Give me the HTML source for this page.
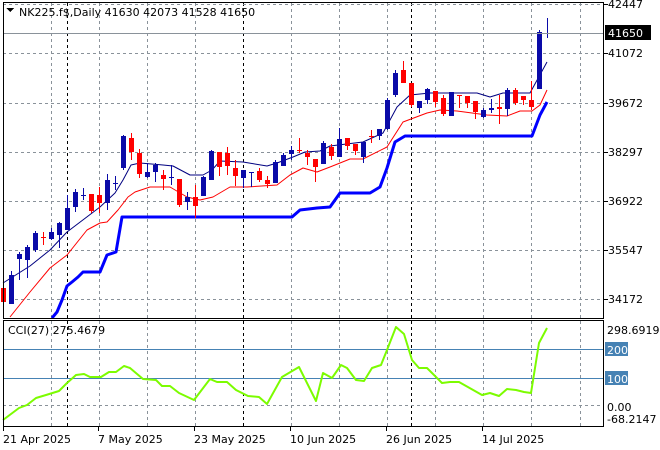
<!DOCTYPE html>
<html><head><meta charset="utf-8"><style>
html,body{margin:0;padding:0;background:#fff;width:660px;height:450px;overflow:hidden}
svg{display:block}
text{font-family:"DejaVu Sans","Liberation Sans",sans-serif;font-size:11px;fill:#000}
</style></head><body>
<svg id="s" width="660" height="450" xmlns="http://www.w3.org/2000/svg" shape-rendering="crispEdges">
<g id="grid" stroke="#8a929a" stroke-dasharray="3,3" stroke-width="1"></g>
<g id="lines" fill="none" shape-rendering="auto"></g>
<g id="candles"></g>
<line x1="3" y1="33.5" x2="604" y2="33.5" stroke="#8a929a"/>
<rect x="3.5" y="2.5" width="600" height="316" fill="none" stroke="#000"/>
<rect x="3.5" y="320.5" width="600" height="106" fill="none" stroke="#000"/>
<path d="M6 8 L14 8 L10 12 Z" fill="#000"/>
<text x="19" y="16">NK225.f$,Daily  41630 42073 41528 41650</text>
<text x="8" y="334">CCI(27) 275.4679</text>
<g id="ylab"></g>
<rect x="605" y="25" width="46" height="15" fill="#000"/>
<text x="608" y="37" style="fill:#fff">41650</text>
<text x="607" y="334">298.6919</text>
<rect x="605" y="342" width="23" height="14" fill="#4682b4"/>
<text x="607" y="354" style="fill:#fff">200</text>
<rect x="605" y="371" width="23" height="14" fill="#4682b4"/>
<text x="607" y="383" style="fill:#fff">100</text>
<text x="607" y="411">0.00</text>
<text x="607" y="423">-68.2147</text>
<g id="dates"></g>
</svg>
<script>
var NS="http://www.w3.org/2000/svg";
function el(p,t,a,txt){var e=document.createElementNS(NS,t);for(var k in a)e.setAttribute(k,a[k]);if(txt)e.textContent=txt;document.getElementById(p).appendChild(e);return e;}
[51,99,147,195,291,339,387,435,483,531,580].forEach(function(x){el('grid','line',{x1:x+.5,y1:3,x2:x+.5,y2:318});el('grid','line',{x1:x+.5,y1:321,x2:x+.5,y2:426});});
[67,243,411].forEach(function(x){el('grid','line',{x1:x+.5,y1:3,x2:x+.5,y2:318,stroke:'#000'});el('grid','line',{x1:x+.5,y1:321,x2:x+.5,y2:426,stroke:'#000'});});
var ys=[4,53,103,152,201,250,299],lb=['42447','41072','39672','38297','36922','35547','34172'];
ys.forEach(function(y,i){el('grid','line',{x1:3,y1:y+.5,x2:604,y2:y+.5});el('grid','line',{x1:604,y1:y+.5,x2:608,y2:y+.5,stroke:'#000','stroke-dasharray':'none'});el('ylab','text',{x:608,y:y+4},lb[i]);});
el('grid','line',{x1:3,y1:405.5,x2:604,y2:405.5});
el('grid','line',{x1:3,y1:349.5,x2:604,y2:349.5,stroke:'#4682b4','stroke-dasharray':'none'});
el('grid','line',{x1:3,y1:378.5,x2:604,y2:378.5,stroke:'#4682b4','stroke-dasharray':'none'});
[[3,'21 Apr 2025'],[98,'7 May 2025'],[194,'23 May 2025'],[290,'10 Jun 2025'],[386,'26 Jun 2025'],[482,'14 Jul 2025']].forEach(function(d){el('dates','text',{x:d[0],y:443},d[1]);el('dates','line',{x1:d[0]+.5,y1:426,x2:d[0]+.5,y2:431,stroke:'#000'});});
function pl(pts,c,w){el('lines','polyline',{points:pts,stroke:c,'stroke-width':w,'stroke-linejoin':'round'});}
pl("3,283 30,266 50,250 67,232 100,207 115,193 123,180 131,165 140,163 163,165 173,166 190,175 203,175 212,170 220,161 243,162 267,166 277,163 293,157 305,152 320,151 330,146 363,142 383,133 397,107 410,95 430,93 477,93 490,97 503,93 530,93 547,62","#000080",1);
pl("10,317 30,292 50,268 67,255 87,230 100,223 107,222 118,210 128,197 135,192 150,187 170,187 187,197 200,200 213,197 230,187 247,187 277,185 290,175 303,168 317,172 330,167 350,159 363,159 387,147 403,122 427,113 440,110 457,111 487,115 507,116 520,111 532,111 540,105 547,90","#ff0000",1);
pl("52,318 57,312 62,300 67,286 72,282 78,277 83,272 100,272 107,255 116,252 122,217 292,217 300,210 317,208 330,207 340,193 370,193 380,187 387,168 395,142 405,136 532,136 540,115 547,102","#0000ff",3);
pl("3,420 19,408 27,405 36,398 46,395 59,391 67,383 76,375 84,374 90,377 101,377 109,372 116,372 124,366 130,368 143,379 156,380 162,386 170,386 179,393 194,400 210,379 217,382 227,382 236,390 248,396 259,397 267,404 282,377 299,367 316,401 323,373 332,378 341,365 347,368 356,380 364,381 372,368 381,365 387,350 396,327 404,334 412,360 419,368 427,368 442,383 450,382 459,382 482,395 490,393 499,396 507,389 516,390 524,392 531,393 539,343 547,328","#7cfc00",2);
var C=[[288,302,285,312,'r'],[275,304,271,304,'b'],[254,259,252,280,'b'],[247,260,245,278,'b'],[233,250,231,252,'b'],[237,238,232,245,'r'],[232,239,228,240,'b'],[223,235,222,248,'b'],
[208,230,195,230,'b'],[192,207,189,212,'b'],[195,196,188,200,'b'],[194,211,194,213,'r'],[195,203,187,213,'r'],[180,203,174,210,'b'],[183,184,176,190,'b'],[136,168,135,170,'b'],[138,152,133,160,'r'],[153,174,149,178,'r'],[172,177,163,178,'b'],[165,172,163,182,'b'],[175,179,170,190,'r'],[177,178,165,185,'b'],[179,205,179,207,'r'],[197,202,192,210,'b'],[197,206,185,218,'r'],[177,196,176,196,'b'],[151,180,150,180,'b'],[152,167,152,176,'r'],[153,166,147,175,'r'],[168,176,160,186,'r'],[170,178,170,188,'b'],[172,173,172,187,'b'],[171,180,168,182,'r'],[180,184,176,188,'r'],[162,183,160,183,'b'],[155,166,153,166,'b'],[150,154,146,160,'b'],[150,151,138,153,'r'],[153,157,150,165,'r'],[159,167,159,182,'r'],[143,164,141,164,'b'],[147,156,144,160,'r'],
[139,157,128,157,'b'],[138,146,138,150,'r'],[144,151,144,155,'r'],[142,157,142,163,'b'],[136,137,130,143,'r'],[129,136,129,140,'b'],[100,129,98,130,'b'],[73,95,70,97,'b'],[70,83,61,83,'r'],[83,105,83,107,'r'],[101,108,101,113,'b'],[89,100,88,104,'b'],[91,102,91,107,'r'],[98,114,95,116,'r'],[92,116,92,116,'b'],[95,96,95,108,'r'],[96,103,96,108,'r'],[101,112,101,119,'r'],[110,117,108,118,'b'],[108,110,99,113,'b'],[107,109,95,124,'r'],[90,109,88,116,'b'],[90,103,88,105,'r'],[96,100,96,105,'r'],[100,107,81,110,'r'],[32,89,30,89,'b'],[33,34,18,38,'b']];
C.forEach(function(c,i){var x=3+8*i,col=c[4]=='r'?'#ff0000':'#0a0aa8';
el('candles','line',{x1:x+.5,y1:c[2],x2:x+.5,y2:c[3],stroke:col});
var h=Math.max(c[1]-c[0],1);el('candles','rect',{x:x-2,y:c[0],width:5,height:h,fill:col});});
</script>
</body></html>
